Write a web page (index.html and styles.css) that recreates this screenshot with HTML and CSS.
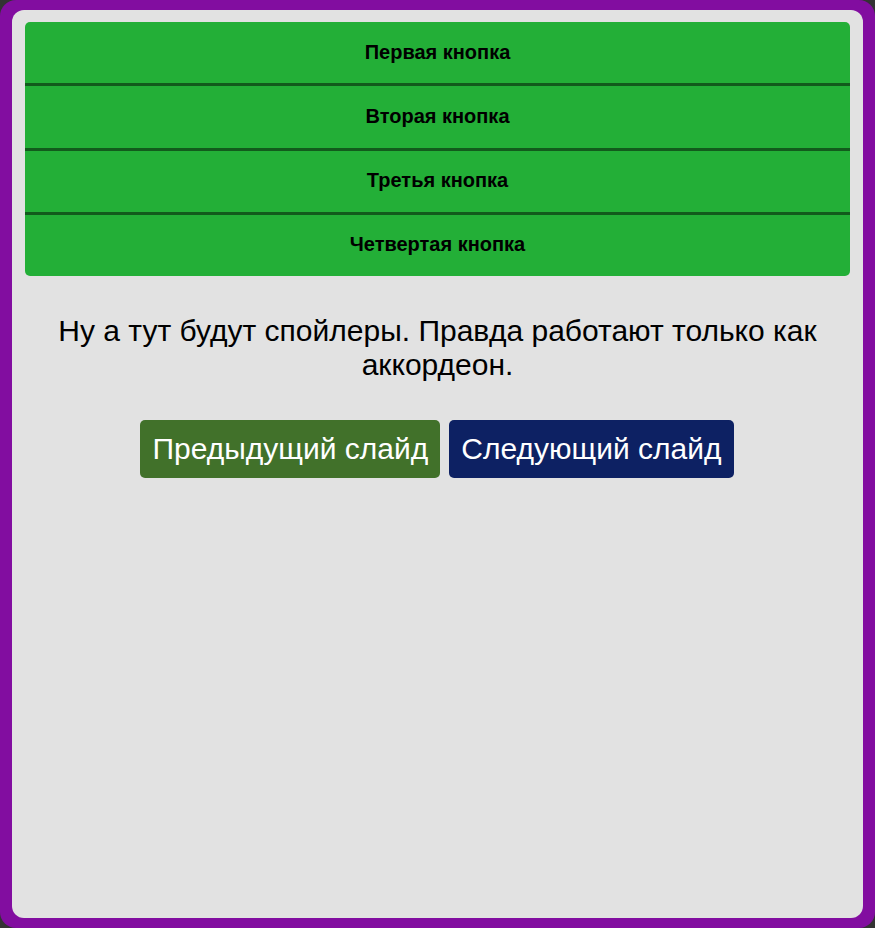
FILE: index.html
```html
<!DOCTYPE html>
<html lang="ru">
<head>
<meta charset="utf-8">
<title>Слайды</title>
<link rel="stylesheet" href="styles.css">
</head>
<body>
<div class="frame">
  <div class="panel">
    <div class="accordion">
      <div class="acc-item">Первая кнопка</div>
      <div class="acc-item">Вторая кнопка</div>
      <div class="acc-item">Третья кнопка</div>
      <div class="acc-item">Четвертая кнопка</div>
    </div>
    <p class="note">Ну а тут будут спойлеры. Правда работают только как аккордеон.</p>
    <div class="nav">
      <button class="btn btn-prev">Предыдущий слайд</button>
      <button class="btn btn-next">Следующий слайд</button>
    </div>
  </div>
</div>
</body>
</html>
```

FILE: styles.css
```css
html, body {
  margin: 0;
  padding: 0;
  height: 100%;
}
body {
  background: #333333;
  font-family: "Liberation Sans", Arial, sans-serif;
}
.frame {
  box-sizing: border-box;
  height: 928px;
  background: #820da0;
  border-radius: 16px;
  padding: 10px 12px;
}
.panel {
  box-sizing: border-box;
  height: 100%;
  background: #e2e2e2;
  border-radius: 12px;
  padding: 12px 13px;
}
.accordion {
  height: 254px;
  display: flex;
  flex-direction: column;
  background: #23af37;
  border-radius: 5px;
  overflow: hidden;
}
.acc-item {
  flex: 1;
  display: flex;
  align-items: center;
  justify-content: center;
  padding-bottom: 1px;
  font-weight: bold;
  font-size: 20px;
  color: #000;
  border-top: 3px solid #125b1c;
}
.acc-item:first-child {
  border-top: none;
}
.note {
  margin: 38px 0 38px;
  text-align: center;
  font-size: 30px;
  color: #000;
}
.nav {
  display: flex;
  justify-content: center;
  gap: 9px;
  padding-right: 1px;
}
.btn {
  font-family: inherit;
  font-size: 30px;
  line-height: 34px;
  padding: 12px 12px;
  border: none;
  border-radius: 5px;
  color: #fff;
  cursor: pointer;
}
.btn-prev {
  background: #41712a;
}
.btn-next {
  background: #0d2163;
}
```
